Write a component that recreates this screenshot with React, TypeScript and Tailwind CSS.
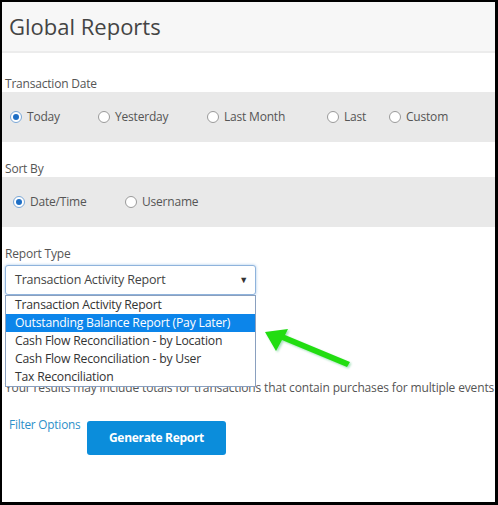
import { useState } from "react";

const DATE_OPTIONS = [
  { label: "Today", width: "w-[88px]" },
  { label: "Yesterday", width: "w-[109px]" },
  { label: "Last Month", width: "w-[120px]" },
  { label: "Last", width: "w-[62px]" },
  { label: "Custom", width: "w-[70px]" },
];

const SORT_OPTIONS = [
  { label: "Date/Time", width: "w-[112px]" },
  { label: "Username", width: "w-[90px]" },
];

const REPORT_TYPES = [
  "Transaction Activity Report",
  "Outstanding Balance Report (Pay Later)",
  "Cash Flow Reconciliation - by Location",
  "Cash Flow Reconciliation - by User",
  "Tax Reconciliation",
];

function Radio({ checked }: { checked: boolean }) {
  return (
    <span
      className={`flex h-[12px] w-[12px] shrink-0 items-center justify-center rounded-full border bg-white ${
        checked ? "border-[#7aa7d6]" : "border-[#9a9a9a]"
      }`}
    >
      {checked && <span className="h-[6px] w-[6px] rounded-full bg-[#1f6fc5]" />}
    </span>
  );
}

function RadioItem({ label, width, checked, onPick }: { label: string; width: string; checked: boolean; onPick: () => void }) {
  return (
    <label className={`flex items-center gap-[5px] ${width} cursor-pointer`} onClick={onPick}>
      <Radio checked={checked} />
      <span>{label}</span>
    </label>
  );
}

export default function App() {
  const [date, setDate] = useState("Today");
  const [sort, setSort] = useState("Date/Time");
  const [report] = useState(REPORT_TYPES[0]);

  return (
    <div
      className="relative h-[505px] w-[498px] overflow-hidden border-t-[2px] border-l-[2px] border-r-[3px] border-b-[3px] border-black bg-white text-[12px] tracking-[-0.2px] text-[#555]"
      style={{ fontFamily: '"Open Sans", "Liberation Sans", sans-serif' }}
    >
      {/* Header */}
      <div className="flex h-[51px] items-center border-b-2 border-[#ececec] bg-[#f7f7f7] pl-[7px]">
        <h1 className="text-[22px] font-normal tracking-normal text-[#444]">Global Reports</h1>
      </div>

      <div className="mt-[23px] pl-[3px] leading-[16px]">Transaction Date</div>
      <div className="flex h-[50px] items-center bg-[#e9e9e9] pl-[8px]">
        {DATE_OPTIONS.map(o => (
          <RadioItem key={o.label} label={o.label} width={o.width} checked={date === o.label} onPick={() => setDate(o.label)} />
        ))}
      </div>

      <div className="mt-[19px] pl-[3px] leading-[16px]">Sort By</div>
      <div className="flex h-[50px] items-center bg-[#e9e9e9] pl-[11px]">
        {SORT_OPTIONS.map(o => (
          <RadioItem key={o.label} label={o.label} width={o.width} checked={sort === o.label} onPick={() => setSort(o.label)} />
        ))}
      </div>

      <div className="mt-[19px] pl-[3px] leading-[16px]">Report Type</div>

      {/* Select with open list */}
      <div className="relative ml-[3px] mt-[3px] w-[251px]">
        <div className="flex h-[30px] items-center justify-between rounded-[3px] border border-[#8fb3dc] bg-white pl-[9px] pr-[7px] text-[12.5px] text-[#444] shadow-[0_0_3px_rgba(102,160,220,0.6)]">
          <span>{report}</span>
          <span className="text-[9px] text-[#333]">▼</span>
        </div>
        <ul className="absolute left-0 top-[30px] z-10 w-[251px] border border-[#8aa0bf] bg-white text-[12.2px] leading-[18px] text-[#333]">
          {REPORT_TYPES.map((r, i) => (
            <li key={r} className={`pl-[9px] ${i === 1 ? "bg-[#0c85ea] text-white" : ""}`}>
              {r}
            </li>
          ))}
        </ul>
      </div>

      <p className="mt-[85px] whitespace-nowrap pl-[3px] text-[12px] leading-[16px] tracking-[-0.15px]">
        Your results may include totals for transactions that contain purchases for multiple events
      </p>

      <div className="mt-[25px] flex items-start pl-[7px]">
        <a className="mt-[-5px] w-[78px] whitespace-nowrap text-[11.8px] text-[#2c8fc9]">Filter Options</a>
        <button className="h-[34px] w-[139px] rounded-[3px] bg-[#0b8ddb] text-[12px] font-bold tracking-[-0.3px] text-white">
          Generate Report
        </button>
      </div>

      {/* Pointer arrow */}
      <svg className="pointer-events-none absolute left-[256px] top-[318px] z-20" width="100" height="55" viewBox="0 0 100 55">
        <defs>
          <filter id="arrowShadow" x="-20%" y="-20%" width="140%" height="140%">
            <feGaussianBlur stdDeviation="1.2" />
          </filter>
        </defs>
        <g transform="translate(1.5,1.5)" filter="url(#arrowShadow)" opacity="0.35">
          <path d="M7 12 L30 9 L27 15 L92 42 L89 47 L24 20 L18 31 Z" fill="#0a4" />
        </g>
        <path d="M7 12 L30 9 L27 15 L92 42 L89 47 L24 20 L18 31 Z" fill="#22dd11" />
      </svg>
    </div>
  );
}
